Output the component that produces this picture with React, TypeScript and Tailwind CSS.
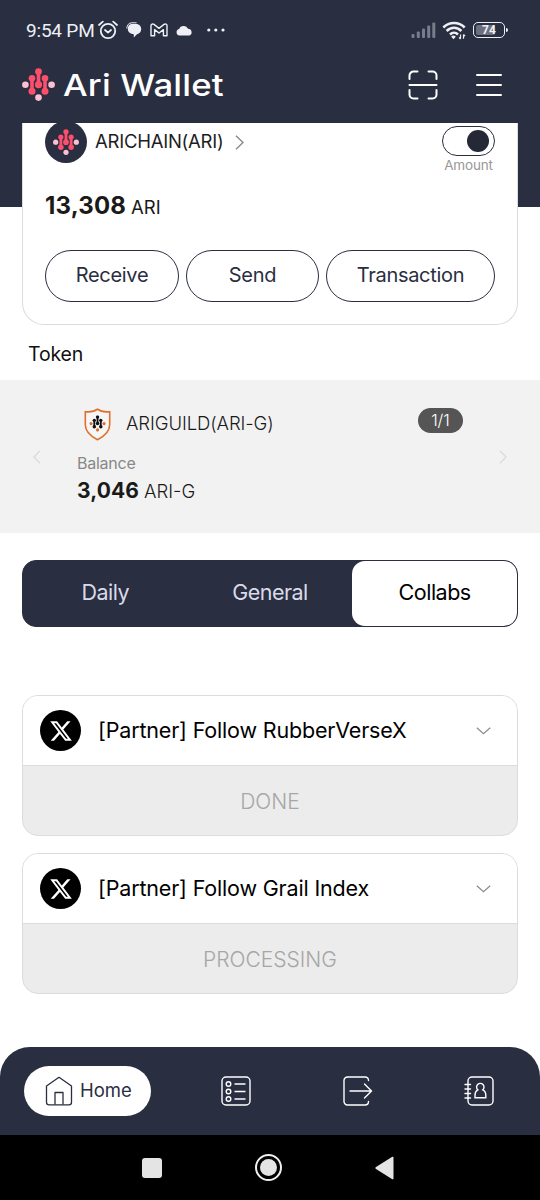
import type { ReactNode } from "react"

const tabs = ["Daily", "General", "Collabs"]

const missions = [
  { title: "[Partner] Follow RubberVerseX", status: "DONE" },
  { title: "[Partner] Follow Grail Index", status: "PROCESSING" },
]

function AriMark({ size, main = "#fb4f6c", dot = "#fbc0d2" }: { size: number; main?: string; dot?: string }) {
  return (
    <svg width={size} height={size} viewBox="0 0 33 33" className="shrink-0">
      <g stroke={main} strokeWidth="3.6">
        <path d="M16.5 4v13M10 10.5v13M23 10.5v13" />
      </g>
      <g fill={main}>
        <circle cx="16.5" cy="3.6" r="3.4" />
        <circle cx="16.5" cy="16.7" r="3.6" />
        <circle cx="10" cy="10.3" r="3.3" />
        <circle cx="10" cy="23.2" r="3.5" />
        <circle cx="23" cy="10.3" r="3.3" />
        <circle cx="23" cy="23.2" r="3.5" />
      </g>
      <g fill={dot}>
        <circle cx="3.4" cy="16.7" r="3.3" />
        <circle cx="29.6" cy="16.7" r="3.3" />
        <circle cx="16.5" cy="29.6" r="3.3" />
      </g>
    </svg>
  )
}

function StatusBar() {
  return (
    <div className="flex h-[60px] items-center pl-[26px] pr-8 font-['Roboto'] text-[#eef0f6]">
      <span className="w-[71px] whitespace-nowrap pt-0.5 text-[19px] tracking-[-0.2px]">9:54 PM</span>
      {/* Alarm */}
      <svg width="22" height="20" viewBox="0 0 22 20" fill="none" stroke="currentColor" strokeWidth="1.8" strokeLinecap="round" strokeLinejoin="round">
        <circle cx="11" cy="11" r="7.2" />
        <path d="M2 5l3.8-3.4M20 5l-3.8-3.4M8 10l3 2.6 3-2.6" />
      </svg>
      {/* Chat */}
      <svg width="16" height="16" viewBox="0 0 16 16" className="ml-[7px]" fill="currentColor">
        <path d="M5 2h5c3.2 0 5.2 2.2 5.2 5.2 0 2.6-1.7 4.5-4.2 5L7.8 15.5v-3.2C4.5 12.1 2 10.3 1.8 7.3 1.7 4.6 2.900 2.600 5 2z" />
        <path d="M.8 6.5C.8 3.300 2.800.8 5.800.8h4.800" fill="none" stroke="currentColor" strokeWidth="1" />
      </svg>
      {/* Gmail */}
      <svg width="18" height="14" viewBox="0 0 18 14" className="ml-2" fill="none" stroke="currentColor" strokeWidth="1.4" strokeLinejoin="round">
        <path d="M1 2.600C1 1 2.800.5 4 1.400l5 4 5-4c1.200-.9 3-.4 3 1.200v10.200h-3.600V6.600L9 10 4.600 6.600v6.200H1z" />
      </svg>
      {/* Cloud */}
      <svg width="17" height="11" viewBox="0 0 17 11" className="ml-2" fill="currentColor">
        <path d="M3.600 10.500a3.300 3.300 0 0 1-.5-6.500A4.800 4.800 0 0 1 12 3.800a3.500 3.500 0 0 1 1.500 6.700z" />
      </svg>
      <svg width="18" height="4" viewBox="0 0 18 4" className="ml-[14px]" fill="currentColor">
        <circle cx="1.8" cy="2" r="1.6" />
        <circle cx="8.8" cy="2" r="1.6" />
        <circle cx="16" cy="2" r="1.6" />
      </svg>
      <div className="ml-auto flex items-center">
        {/* Signal */}
        <svg width="25" height="16" viewBox="0 0 25 16" fill="#787c8b">
          <rect x="0.5" y="12" width="3" height="4" rx="1" />
          <rect x="5.8" y="9.5" width="3" height="6.5" rx="1" />
          <rect x="11" y="6.5" width="3" height="9.5" rx="1" />
          <rect x="16.2" y="3.5" width="3" height="12.5" rx="1" />
          <rect x="21.3" y="0.5" width="3" height="15.5" rx="1" />
        </svg>
        {/* Wifi */}
        <svg width="24" height="19" viewBox="0 0 24 19" className="ml-1.5" fill="none" stroke="currentColor" strokeWidth="2.5">
          <path d="M1.300 6.500c6-6 15.400-6 21.400 0M4.600 10c4.200-4.200 10.600-4.200 14.800 0M8 13.500c2.300-2.300 5.700-2.300 8 0" />
          <path d="M9.200 15.700c1.300-1.500 3.300-1.500 4.600 0l-2.300 2.600z" fill="currentColor" stroke="none" />
          <path d="M18.500 13.500v4.300M21.500 13.500v4.300M17 16.300l1.500 1.700M23 15.200l-1.500-1.700" strokeWidth="1.2" />
        </svg>
        {/* Battery */}
        <div className="relative ml-[7px] flex h-4 w-8 items-center justify-center rounded-[5px] border-[1.5px] border-current">
          <div className="absolute left-[2px] top-[2px] h-[10px] w-[19px] rounded-[2px] bg-[#6b6f7e]" />
          <span className="relative text-[12px] font-bold leading-none">74</span>
        </div>
        <div className="ml-px h-1 w-[2px] rounded-r bg-current" />
      </div>
    </div>
  )
}

function Header() {
  return (
    <div className="flex h-[49px] items-center pl-[22px] pr-[38px]">
      <AriMark size={33} />
      <span className="ml-2 w-[300px] origin-left scale-x-[1.14] whitespace-nowrap pt-0.5 text-[30.5px] font-medium leading-none tracking-[0.15px] text-white">
        Ari Wallet
      </span>
      <svg width="30" height="30" viewBox="0 0 30 30" className="ml-auto shrink-0" fill="none" stroke="#fff" strokeWidth="2" strokeLinecap="round">
        <path d="M1.500 9V5.500a4 4 0 0 1 4-4H9.500M20.500 1.500h4a4 4 0 0 1 4 4V9M28.500 20v4.500a4 4 0 0 1-4 4h-4M9.500 28.500h-4a4 4 0 0 1-4-4V20M1.500 15h27" />
      </svg>
      <svg width="26" height="24" viewBox="0 0 26 24" className="ml-[38px] shrink-0" stroke="#fff" strokeWidth="2" strokeLinecap="round">
        <path d="M1 2h24M1 12h24M1 22h24" />
      </svg>
    </div>
  )
}

function PillButton({ children, className }: { children: ReactNode; className: string }) {
  return (
    <button className={`h-[52px] rounded-full border-[1.5px] border-[#2a2e41] pb-0.5 text-[20px] tracking-[-0.3px] text-[#2a2e41] ${className}`}>
      {children}
    </button>
  )
}

function WalletCard() {
  return (
    <section className="mx-[22px] -mt-[84px] h-[202px] overflow-hidden rounded-b-[22px] border-[1.5px] border-t-0 border-[#dcdcdc] bg-white px-[22px]">
      <div className="flex h-10 items-start">
        <div className="-mt-[2px] flex size-[42px] shrink-0 items-center justify-center rounded-full bg-[#2a2e41]">
          <AriMark size={26} />
        </div>
        <span className="ml-2 mt-1.5 text-[18.5px] leading-6 tracking-[-0.25px] text-[#1d1d1f]">ARICHAIN(ARI)</span>
        <svg width="9" height="15" viewBox="0 0 9 15" className="ml-3 mt-3" fill="none" stroke="#8a8a8a" strokeWidth="1.4">
          <path d="M1 .8l7 6.700-7 6.700" />
        </svg>
        <div className="ml-auto flex shrink-0 flex-col items-center">
          <div className="mt-[3px] flex h-[30px] w-[53px] items-center justify-end rounded-full border-[1.5px] border-[#2a2e41] pr-[5px]">
            <div className="size-[22px] rounded-full bg-[#252837]" />
          </div>
          <span className="text-[13.5px] leading-[19px] tracking-[-0.15px] text-[#999]">Amount</span>
        </div>
      </div>
      <div className="mt-[27px] flex items-baseline leading-8 text-[#1a1a1a]">
        <span className="text-[24px] font-bold tracking-[0.15px]">13,308</span>
        <span className="ml-[5px] text-[18.5px]">ARI</span>
      </div>
      <div className="mt-[27px] flex gap-[7px]">
        <PillButton className="w-[134px]">Receive</PillButton>
        <PillButton className="w-[133px]">Send</PillButton>
        <PillButton className="w-[169px]">Transaction</PillButton>
      </div>
    </section>
  )
}

function TokenBand() {
  return (
    <section className="flex h-[153px] items-center bg-[#f2f2f2] px-[33px]">
      <svg width="8" height="14" viewBox="0 0 8 14" fill="none" stroke="#dcdcdc" strokeWidth="1.5">
        <path d="M7 .7L1 7l6 6.300" />
      </svg>
      <div className="ml-9 h-full flex-1 pt-7">
        <div className="flex h-8 items-start">
          <svg width="27" height="33" viewBox="0 0 27 33" className="ml-[7px]">
            <path d="M13.500 1.200C10.500 3.600 6 4.200 1.300 3.700v12.800c0 7 5.200 11.700 12.200 15.200 7-3.500 12.200-8.200 12.200-15.200V3.700c-4.700.5-9.200-.1-12.200-2.500z" fill="#f6f6f6" stroke="#e0702c" strokeWidth="1.6" />
            <g transform="translate(5.3 7.2) scale(.5)">
              <AriMark size={33} main="#111" dot="#e0702c" />
            </g>
          </svg>
          <span className="ml-[15px] mt-[3px] text-[18.5px] font-light leading-6 tracking-[-0.1px] text-[#1a1a1a]">ARIGUILD(ARI-G)</span>
          <span className="ml-auto mr-[36px] flex h-[25px] w-[45px] items-center justify-center rounded-full bg-[#555] text-[16.5px] font-light text-white">
            1/1
          </span>
        </div>
        <p className="mt-[13px] text-[16px] leading-[21px] tracking-[-0.25px] text-[#888]">Balance</p>
        <div className="flex items-baseline leading-[34px] text-[#1a1a1a]">
          <span className="text-[21px] font-bold tracking-[0.1px]">3,046</span>
          <span className="ml-[5px] text-[18.5px] font-light">ARI-G</span>
        </div>
      </div>
      <svg width="8" height="14" viewBox="0 0 8 14" fill="none" stroke="#dcdcdc" strokeWidth="1.5">
        <path d="M1 .7L7 7l-6 6.300" />
      </svg>
    </section>
  )
}

function MissionCard({ title, status }: { title: string; status: string }) {
  return (
    <div className="h-[141px] overflow-hidden rounded-[16px] border-[1.5px] border-[#dcdcdc] bg-[#ececec]">
      <div className="flex h-[70px] items-center border-b-[1.5px] border-[#dcdcdc] bg-white pl-[17px] pr-[26px]">
        <div className="flex size-[41px] items-center justify-center rounded-full bg-black">
          <svg width="24" height="24" viewBox="0 0 24 24" fill="#fff">
            <path d="M18.244 2.250h3.308l-7.227 8.260 8.502 11.240H16.170l-5.214-6.817L4.990 21.750H1.680l7.730-8.835L1.254 2.250H8.080l4.713 6.231zm-1.161 17.520h1.833L7.084 4.126H5.117z" />
          </svg>
        </div>
        <span className="ml-[17px] whitespace-nowrap text-[21.5px] tracking-[-0.17px] text-black">{title}</span>
        <svg width="15" height="8" viewBox="0 0 15 8" className="ml-auto" fill="none" stroke="#8c8c8c" strokeWidth="1.2">
          <path d="M.8.800l6.700 6 6.700-6" />
        </svg>
      </div>
      <div className="flex h-[69px] items-center justify-center pt-0.5 text-[21px] font-light text-[#a6a6a6]">{status}</div>
    </div>
  )
}

function BottomNav() {
  return (
    <nav className="flex h-[88px] items-center rounded-t-[30px] bg-[#2a2e41] pl-6 pr-[46px]">
      <div className="flex h-[50px] w-[127px] items-center rounded-full bg-white pl-[21px]">
        <svg width="28" height="30" viewBox="0 0 28 30" fill="none" stroke="#2a2e41" strokeWidth="1.3" strokeLinejoin="round">
          <path d="M1.500 10L14 1.300 26.500 10v16.200a2.600 2.600 0 0 1-2.600 2.600H4.100a2.600 2.600 0 0 1-2.600-2.600z" />
          <path d="M10 28.500V16.500h8v12" />
        </svg>
        <span className="ml-[7px] text-[18.5px] text-[#2a2e41]">Home</span>
      </div>
      <div className="flex flex-1 items-center justify-between pl-[70px] text-white">
        {/* List */}
        <svg width="30" height="30" viewBox="0 0 30 30" fill="none" stroke="currentColor" strokeWidth="1.4">
          <rect x="1" y="1" width="28" height="28" rx="4" />
          <circle cx="7.5" cy="8" r="2.3" />
          <circle cx="7.5" cy="15.5" r="2.3" />
          <circle cx="7.5" cy="23" r="2.3" />
          <path d="M13.500 8h11M13.500 15.500h11M13.500 23h11" />
        </svg>
        {/* Export */}
        <svg width="30" height="30" viewBox="0 0 30 30" fill="none" stroke="currentColor" strokeWidth="1.4" strokeLinecap="round">
          <path d="M25.500 4.500c0-2.300-1.200-3.500-3.500-3.500H4.500A3.500 3.500 0 0 0 1 4.500v21A3.500 3.500 0 0 0 4.500 29H22c2.300 0 3.500-1.200 3.500-3.500" />
          <path d="M7 15h21.500M21.500 8l7 7-7 7" />
        </svg>
        {/* Contacts */}
        <svg width="30" height="30" viewBox="0 0 30 30" fill="none" stroke="currentColor" strokeWidth="1.4" strokeLinecap="round">
          <rect x="4" y="1" width="25" height="28" rx="4" />
          <path d="M1 8.500h5.500M1 13h5.500M1 17.500h5.500M1 22h5.500" />
          <path d="M13.800 13.800a3.700 3.700 0 1 1 5 0c2.200 1 3 3 3 5.500v2.500H11v-2.500c0-2.500.8-4.500 2.800-5.500z" />
        </svg>
      </div>
    </nav>
  )
}

export default function App() {
  return (
    <div className="flex h-[1200px] w-[540px] flex-col overflow-hidden bg-white font-['Inter',sans-serif]">
      <header className="h-[123px] bg-[#2a2e41]">
        <StatusBar />
        <Header />
      </header>
      <div className="h-[84px] shrink-0 bg-[#2a2e41]" />
      <WalletCard />

      <h2 className="ml-7 mt-[17px] h-[38px] text-[19.5px] leading-6 tracking-[-0.15px] text-[#111]">Token</h2>
      <TokenBand />

      <div className="mx-[22px] mt-[27px] grid h-[67px] shrink-0 grid-cols-3 overflow-hidden rounded-[14px] border-[1.5px] border-[#2a2e41] bg-[#2a2e41]">
        {tabs.map((tab) => (
          <button
            key={tab}
            className={`pb-[3px] text-[21.5px] tracking-[-0.5px] ${tab === "Collabs" ? "rounded-[13px] bg-white text-black" : "text-[#d9dbe8]"}`}
          >
            {tab}
          </button>
        ))}
      </div>

      <div className="mx-[22px] mt-[68px] flex flex-1 flex-col gap-[17px]">
        {missions.map((m) => (
          <MissionCard key={m.title} {...m} />
        ))}
      </div>

      <BottomNav />
      <div className="flex h-[65px] shrink-0 items-center bg-black pl-[142px]">
        <div className="size-5 rounded-[3px] bg-[#e4e4e4]" />
        <div className="ml-[93px] flex size-[27px] items-center justify-center rounded-full border-2 border-[#f0f0f0]">
          <div className="size-[17px] rounded-full bg-[#e4e4e4]" />
        </div>
        <svg width="19" height="24" viewBox="0 0 19 24" className="ml-[93px]" fill="#e4e4e4">
          <path d="M17.300.8c.8-.4 1.200 0 1.200.8v20.800c0 .8-.5 1.200-1.200.8L1 13c-.9-.6-.9-1.400 0-2z" />
        </svg>
      </div>
    </div>
  )
}
